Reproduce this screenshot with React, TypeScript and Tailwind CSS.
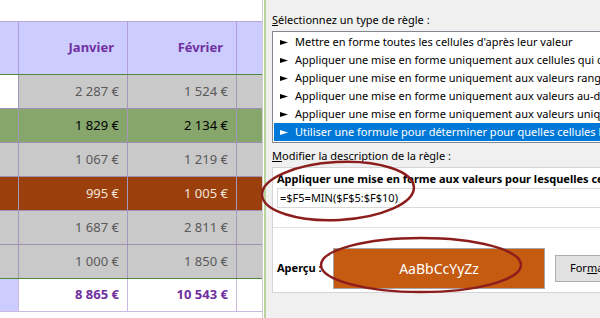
import React from "react";

type Row = { bg: string; first: string; text: string; a: string; b: string };

const rows: Row[] = [
  { bg: "bg-[#c9c9c9]", first: "bg-white", text: "text-[#595959]", a: "2 287 €", b: "1 524 €" },
  { bg: "bg-[#86a66c]", first: "bg-[#86a66c]", text: "text-black", a: "1 829 €", b: "2 134 €" },
  { bg: "bg-[#c9c9c9]", first: "bg-[#c9c9c9]", text: "text-[#595959]", a: "1 067 €", b: "1 219 €" },
  { bg: "bg-[#9b400c]", first: "bg-[#9b400c]", text: "text-[#f3e4d8]", a: "995 €", b: "1 005 €" },
  { bg: "bg-[#c9c9c9]", first: "bg-[#c9c9c9]", text: "text-[#595959]", a: "1 687 €", b: "2 811 €" },
  { bg: "bg-[#c9c9c9]", first: "bg-[#c9c9c9]", text: "text-[#595959]", a: "1 000 €", b: "1 850 €" },
];

const ruleTypes = [
  "Mettre en forme toutes les cellules d'après leur valeur",
  "Appliquer une mise en forme uniquement aux cellules qui contiennent",
  "Appliquer une mise en forme uniquement aux valeurs rangées parmi les premières",
  "Appliquer une mise en forme uniquement aux valeurs au-dessus ou en dessous",
  "Appliquer une mise en forme uniquement aux valeurs uniques ou aux doublons",
  "Utiliser une formule pour déterminer pour quelles cellules le format sera appliqué",
];

function Arrow({ color }: { color: string }) {
  return (
    <svg width="8" height="7" viewBox="0 0 8 7" className="shrink-0">
      <polygon points="0,1 8,3.5 0,6" fill={color} />
    </svg>
  );
}

function Sheet() {
  return (
    <div className="w-[262px] shrink-0 flex flex-col bg-white font-['Noto_Sans',sans-serif] text-[13px]">
      <div className="h-[22px] border-b border-[#b4a7d6]" />
      <div className="grid grid-cols-[19px_109px_109px_25px] h-[53px] bg-[#ccccff] border-b border-[#4f8a3c]">
        <div className="border-r border-[#b39ddb]" />
        <div className="border-r border-[#b39ddb] flex items-center justify-end pr-[13px] font-bold text-[#7030a0]">Janvier</div>
        <div className="border-r border-[#b39ddb] flex items-center justify-end pr-[13px] font-bold text-[#7030a0]">Février</div>
        <div />
      </div>
      {rows.map((r, i) => (
        <div
          key={i}
          className={`grid grid-cols-[19px_109px_109px_25px] h-[34px] border-b ${i === rows.length - 1 ? "border-[#4f8a3c]" : "border-[#9f8fb5]"} ${r.bg} ${r.text}`}
        >
          <div className={`border-r border-[#a596bb] ${r.first}`} />
          <div className="border-r border-[#a596bb] flex items-center justify-end pr-[8px]">{r.a}</div>
          <div className="border-r border-[#a596bb] flex items-center justify-end pr-[8px]">{r.b}</div>
          <div />
        </div>
      ))}
      <div className="grid grid-cols-[19px_109px_109px_25px] h-[33px] border-b border-[#c9b8e3] font-bold text-[#7030a0]">
        <div className="bg-[#ccccff] border-r border-[#c9b8e3]" />
        <div className="border-r border-[#c9b8e3] flex items-center justify-end pr-[8px]">8 865 €</div>
        <div className="border-r border-[#c9b8e3] flex items-center justify-end pr-[8px]">10 543 €</div>
        <div />
      </div>
    </div>
  );
}

function Dialog() {
  return (
    <div className="flex-1 min-w-0 bg-[#f0f0f0] pl-[6px] pt-[12px] font-['Noto_Sans',sans-serif] text-[11px] text-black overflow-hidden">
      <div className="h-[16px] leading-[16px] whitespace-nowrap">
        <span className="underline">S</span>électionnez un type de règle :
      </div>
      <div className="mt-[3px] border border-[#828790] bg-white pl-[1px] py-[1px] w-[400px]">
        {ruleTypes.map((t, i) => {
          const sel = i === ruleTypes.length - 1;
          return (
            <div
              key={i}
              className={`h-[18px] flex items-center whitespace-nowrap pl-[6px] ${sel ? "bg-[#0078d7] text-white" : ""}`}
            >
              <Arrow color={sel ? "#ffffff" : "#000000"} />
              <span className="ml-[7px]">{t}</span>
            </div>
          );
        })}
      </div>
      <div className="mt-[5px] h-[16px] leading-[16px] whitespace-nowrap">
        <span className="underline">M</span>odifier la description de la règle :
      </div>
      <div className="mt-[3px] w-[400px] h-[126px] border border-[#d5d5d5] bg-white flex flex-col">
        <div className="pl-[4px] pt-[3px] h-[19px] leading-[16px] font-bold whitespace-nowrap">
          Appliquer une mise en forme aux valeurs pour lesquelles cette formule est vraie :
        </div>
        <div className="ml-[4px] mt-[1px] h-[20px] border border-[#d9d9d9] bg-white flex items-center pl-[2px] whitespace-nowrap">
          =$F5=MIN($F$5:$F$10)
        </div>
        <div className="mt-[19px] h-px bg-[#e3e3e3]" />
        <div className="flex items-center mt-[20px] pl-[4px]">
          <div className="w-[56px] font-bold whitespace-nowrap">Aperçu :</div>
          <div className="w-[212px] h-[41px] bg-[#c55a11] border border-[#a6a6a6] flex items-center justify-center text-white text-[14px]">
            AaBbCcYyZz
          </div>
          <div className="ml-[10px] w-[80px] h-[27px] bg-[#e1e1e1] border border-[#adadad] flex items-center pl-[14px] whitespace-nowrap">
            For<span className="underline">m</span>at...
          </div>
        </div>
      </div>
    </div>
  );
}

export default function App() {
  return (
    <div className="relative w-[600px] h-[318px] overflow-hidden flex bg-white">
      <Sheet />
      <div className="w-[4px] shrink-0 border-l border-[#cfcfcf] border-r-2 border-r-[#b8d49c] bg-white" />
      <Dialog />
      <svg className="absolute inset-0 pointer-events-none" width="600" height="318" viewBox="0 0 600 318">
        <ellipse cx="338" cy="191" rx="76" ry="29" fill="none" stroke="#8c1d1d" strokeWidth="2.5" transform="rotate(-3 338 191)" />
        <ellipse cx="421" cy="265" rx="100" ry="27" fill="none" stroke="#8c1d1d" strokeWidth="2.5" />
      </svg>
    </div>
  );
}
